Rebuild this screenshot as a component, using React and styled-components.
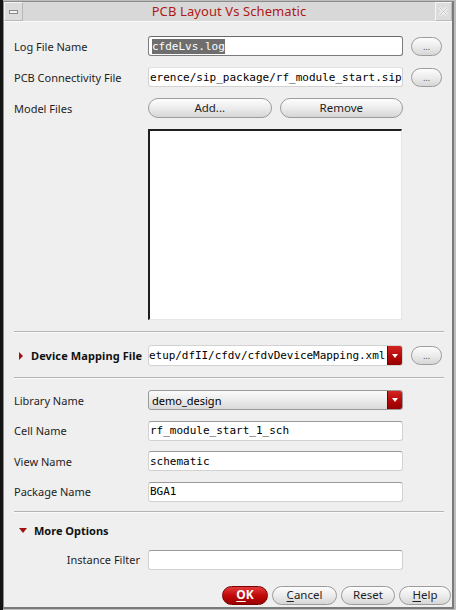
import React from "react";
import styled, { createGlobalStyle } from "styled-components";

const GlobalStyle = createGlobalStyle`
  html, body {
    margin: 0;
    padding: 0;
    background: #1c1c1c;
  }
  * {
    box-sizing: border-box;
  }
`;

const UI = `"Noto Sans", "DejaVu Sans", sans-serif`;
const MONO = `"DejaVu Sans Mono", "Liberation Mono", monospace`;

//Styled-Components
const Screen = styled.div`
  width: 456px;
  height: 610px;
  padding: 1px 2px 1px 3px;
  background: linear-gradient(90deg, #141414 0 3px, #bdbdbd 3px 100%);
  display: flex;
  font-family: ${UI};
`;

const Window = styled.div`
  flex: 1;
  display: flex;
  flex-direction: column;
  background: #efefef;
  border: 1px solid #8c8c8c;
  border-right: 2px solid #7a7a7a;
  border-bottom: 2px solid #7a7a7a;
`;

const TitleBar = styled.div`
  height: 20px;
  display: flex;
  align-items: stretch;
  background: #d8d8d8;
  border-bottom: 1px solid #fbfbfb;
`;

const TitleButton = styled.div`
  width: ${(p) => p.w}px;
  display: flex;
  align-items: center;
  justify-content: center;
  background: #dcdcdc;
  border: 1px solid #f6f6f6;
  border-right-color: #b8b8b8;
  border-bottom-color: #b8b8b8;
`;

const Title = styled.div`
  flex: 1;
  text-align: center;
  line-height: 19px;
  font-size: 13px;
  color: #b01818;
  letter-spacing: 0.1px;
`;

const Body = styled.div`
  flex: 1;
  display: flex;
  flex-direction: column;
  padding: 14px 0 0 10px;
`;

const Grid = styled.div`
  display: grid;
  grid-template-columns: 126px 255px 31px;
  column-gap: 8px;
  row-gap: ${(p) => p.gap || 11}px;
  align-items: center;
`;

const Label = styled.div`
  font-size: 11px;
  color: #1e1e1e;
  white-space: nowrap;
  text-align: ${(p) => (p.right ? "right" : "left")};
`;

const Expander = styled.div`
  display: flex;
  align-items: center;
  gap: ${(p) => p.gap || 7}px;
  font-size: 11px;
  font-weight: bold;
  color: #111;
  white-space: nowrap;
  padding-left: 5px;
  letter-spacing: ${(p) => p.spacing || 0}px;
`;

const Caret = styled.span`
  width: 0;
  height: 0;
  ${(p) =>
    p.open
      ? `border-left: 4px solid transparent;
         border-right: 4px solid transparent;
         border-top: 5px solid #a01010;`
      : `border-top: 4px solid transparent;
         border-bottom: 4px solid transparent;
         border-left: 4px solid #a01010;`}
`;

const TextInput = styled.div`
  height: ${(p) => p.h || 20}px;
  display: flex;
  align-items: center;
  padding-left: ${(p) => (p.focus ? 3 : 1)}px;
  background: #fff;
  border: 1px solid ${(p) => (p.focus ? "#7c7c7c" : "#d2d2d2")};
  border-top-color: ${(p) => (p.focus ? "#6a6a6a" : p.flat ? "#e2e2e2" : "#9a9a9a")};
  border-radius: 3px;
  font-family: ${MONO};
  font-size: 11px;
  color: #000;
  white-space: nowrap;
  overflow: hidden;
`;

const Selected = styled.span`
  background: #6e6e6e;
  color: #fff;
  padding: 1px 0;
`;

const Pill = styled.button`
  height: ${(p) => p.h || 20}px;
  width: ${(p) => (p.w ? `${p.w}px` : "100%")};
  padding: 0;
  border: 1px solid #9c9c9c;
  border-radius: 10px;
  background: linear-gradient(#fdfdfd, #ececec 50%, #d6d6d6);
  font-family: ${UI};
  font-size: ${(p) => (p.dots ? 9 : 11.5)}px;
  color: ${(p) => (p.dots ? "#555" : "#1e1e1e")};
  line-height: 1;
  display: flex;
  align-items: center;
  justify-content: center;
`;

const Red = styled(Pill)`
  border-color: #7a0000;
  background: linear-gradient(#e33a3a, #c20a0a 50%, #9c0000);
  color: #fff;
  font-weight: bold;
  font-size: 12px;
`;

const Pair = styled.div`
  display: flex;
  gap: 8px;
`;

const ListBox = styled.div`
  height: 191px;
  margin-right: 1px;
  background: #fff;
  border-top: 2px solid #1e1e1e;
  border-left: 2px solid #1e1e1e;
  border-right: 1px solid #e6e6e6;
  border-bottom: 1px solid #e6e6e6;
`;

const Separator = styled.div`
  height: 1px;
  margin: ${(p) => p.m || "11px 0 12px"};
  width: 430px;
  background: #b4b4b4;
  border-bottom: 1px solid #fafafa;
  box-sizing: content-box;
`;

const Combo = styled.div`
  height: ${(p) => p.h || 20}px;
  display: flex;
  align-items: stretch;
  border: 1px solid ${(p) => (p.gray ? "#9a9a9a" : "#d2d2d2")};
  border-radius: 3px;
  overflow: hidden;
  background: ${(p) =>
    p.gray ? "linear-gradient(#fbfbfb, #eaeaea 55%, #d9d9d9)" : "#fff"};
`;

const ComboText = styled.div`
  flex: 1;
  display: flex;
  align-items: center;
  padding-left: ${(p) => (p.mono ? 0 : 3)}px;
  font-family: ${(p) => (p.mono ? MONO : UI)};
  font-size: 11px;
  letter-spacing: ${(p) => (p.mono ? -0.06 : 0)}px;
  color: #000;
  white-space: nowrap;
  overflow: hidden;
`;

const Arrow = styled.div`
  width: 15px;
  flex-shrink: 0;
  display: flex;
  align-items: center;
  justify-content: center;
  background: linear-gradient(#d42424, #b40808 55%, #960000);
  border-left: 1px solid #7a0000;
  &::after {
    content: "";
    border-left: 3.5px solid transparent;
    border-right: 3.5px solid transparent;
    border-top: 4px solid #fff;
  }
`;

const Footer = styled.div`
  display: flex;
  justify-content: flex-end;
  gap: 4px;
  padding-right: 1px;
  margin-top: 16px;
`;

const Mnemonic = styled.span`
  text-decoration: underline;
  text-underline-offset: 2px;
`;

function Dots() {
  return (
    <Pill w={31} h={19} dots>
      ...
    </Pill>
  );
}

export default function App() {
  return (
    <>
      <GlobalStyle />
      <Screen>
        <Window>
          <TitleBar>
            <TitleButton w={19}>
              <svg width="9" height="4" viewBox="0 0 9 4">
                <rect x="0.5" y="0.5" width="8" height="3" fill="#f4f4f4" stroke="#8a8a8a" />
              </svg>
            </TitleButton>
            <Title>PCB Layout Vs Schematic</Title>
            <TitleButton w={17}>
              <svg width="11" height="11" viewBox="0 0 11 11">
                <path d="M2 2 L9 9 M9 2 L2 9" stroke="#f2f2f2" strokeWidth="3" />
                <path d="M2 2 L9 9 M9 2 L2 9" stroke="#c4c4c4" strokeWidth="1" />
              </svg>
            </TitleButton>
          </TitleBar>

          <Body>
            <Grid>
              <Label>Log File Name</Label>
              <TextInput focus>
                <Selected>cfdeLvs.log</Selected>
              </TextInput>
              <Dots />

              <Label>PCB Connectivity File</Label>
              <TextInput flat>erence/sip_package/rf_module_start.sip</TextInput>
              <Dots />

              <Label>Model Files</Label>
              <Pair>
                <Pill>Add...</Pill>
                <Pill>Remove</Pill>
              </Pair>
              <div />

              <div />
              <ListBox />
              <div />
            </Grid>

            <Separator />

            <Grid>
              <Expander gap={8} spacing={0.1}>
                <Caret />
                Device Mapping File
              </Expander>
              <Combo h={21}>
                <ComboText mono>etup/dfII/cfdv/cfdvDeviceMapping.xml</ComboText>
                <Arrow />
              </Combo>
              <Dots />
            </Grid>

            <Separator m="11px 0 11px" />

            <Grid gap={10.5}>
              <Label>Library Name</Label>
              <Combo gray>
                <ComboText>demo_design</ComboText>
                <Arrow />
              </Combo>
              <div />

              <Label>Cell Name</Label>
              <TextInput>rf_module_start_1_sch</TextInput>
              <div />

              <Label>View Name</Label>
              <TextInput>schematic</TextInput>
              <div />

              <Label>Package Name</Label>
              <TextInput>BGA1</TextInput>
              <div />
            </Grid>

            <Separator m="9px 0 10px" />

            <Grid>
              <Expander>
                <Caret open />
                More Options
              </Expander>
              <div />
              <div />
            </Grid>

            <Grid style={{ marginTop: 12 }}>
              <Label right>Instance Filter</Label>
              <TextInput />
              <div />
            </Grid>

            <Footer>
              <Red w={46} h={19}>
                <Mnemonic>O</Mnemonic>K
              </Red>
              <Pill w={65} h={19}>
                <Mnemonic>C</Mnemonic>ancel
              </Pill>
              <Pill w={54} h={19}>
                Reset
              </Pill>
              <Pill w={52} h={19}>
                <Mnemonic>H</Mnemonic>elp
              </Pill>
            </Footer>
          </Body>
        </Window>
      </Screen>
    </>
  );
}
